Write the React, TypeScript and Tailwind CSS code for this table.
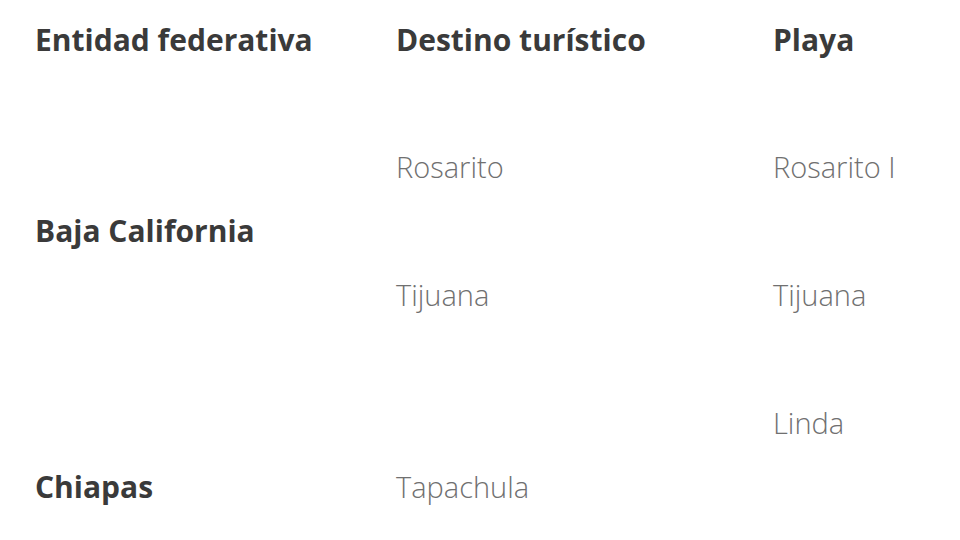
import React from "react";

const font = { fontFamily: '"Open Sans", "Liberation Sans", sans-serif' };

export default function App() {
  return (
    <div className="h-[540px] w-[960px] overflow-hidden bg-white px-[35px]" style={font}>
      <table className="w-[925px] table-fixed border-collapse text-left">
        <colgroup>
          <col className="w-[361px]" />
          <col className="w-[377px]" />
          <col />
        </colgroup>
        <thead>
          <tr className="h-[103px]">
            <th className="p-0 pt-[20px] align-top text-[30px] font-bold leading-[40px] text-[#3a3a3a]">Entidad federativa</th>
            <th className="p-0 pt-[20px] align-top text-[30px] font-bold leading-[40px] text-[#3a3a3a]">Destino turístico</th>
            <th className="p-0 pt-[20px] align-top text-[30px] font-bold leading-[40px] text-[#3a3a3a]">Playa</th>
          </tr>
        </thead>
        <tbody className="leading-[40px]">
          <tr className="h-[128px]">
            <td rowSpan={2} className="p-0 align-middle text-[30px] font-bold text-[#3a3a3a]">Baja California</td>
            <td className="p-0 align-middle text-[29px] font-light text-[#707070]">Rosarito</td>
            <td className="p-0 align-middle text-[29px] font-light text-[#707070]">Rosarito I</td>
          </tr>
          <tr className="h-[128px]">
            <td className="p-0 align-middle text-[29px] font-light text-[#707070]">Tijuana</td>
            <td className="p-0 align-middle text-[29px] font-light text-[#707070]">Tijuana</td>
          </tr>
          <tr className="h-[128px]">
            <td rowSpan={2} className="p-0 align-middle text-[30px] font-bold text-[#3a3a3a]">Chiapas</td>
            <td rowSpan={2} className="p-0 align-middle text-[29px] font-light text-[#707070]">Tapachula</td>
            <td className="p-0 align-middle text-[29px] font-light text-[#707070]">Linda</td>
          </tr>
          <tr className="h-[128px]">
            <td className="p-0 align-middle text-[29px] font-light text-[#707070]">Escollera</td>
          </tr>
        </tbody>
      </table>
    </div>
  );
}
